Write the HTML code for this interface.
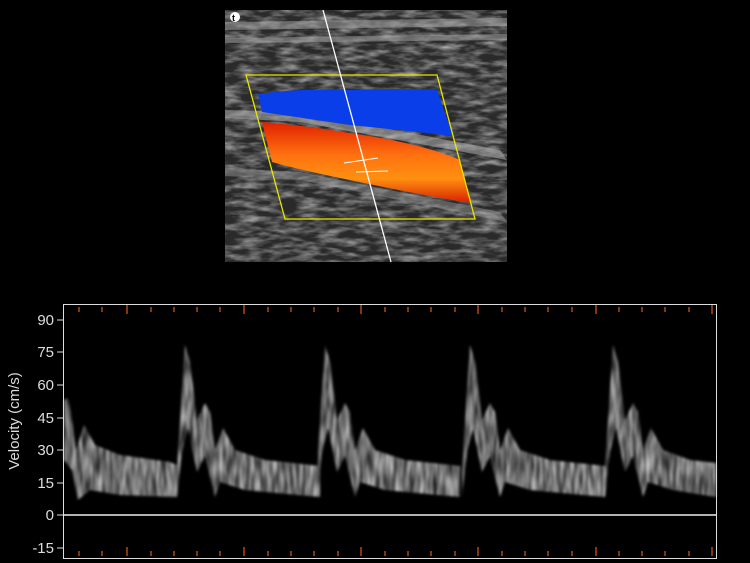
<!DOCTYPE html>
<html><head><style>
html,body{margin:0;padding:0;background:#000;width:750px;height:563px;overflow:hidden}
svg{display:block}
</style></head><body>
<svg width="750" height="563" viewBox="0 0 750 563" xmlns="http://www.w3.org/2000/svg">
<defs>
<filter id="n" x="0" y="0" width="100%" height="100%">
<feTurbulence type="fractalNoise" baseFrequency="0.05 0.18" numOctaves="3" seed="3"/>
<feColorMatrix values="0 0 0 0 0.55  0 0 0 0 0.55  0 0 0 0 0.55  0 0 0 1.4 -0.5"/>
<feComposite in2="SourceGraphic" operator="in"/>
</filter>
<filter id="w" x="-5%" y="-5%" width="110%" height="110%">
<feTurbulence type="fractalNoise" baseFrequency="0.3 0.04" numOctaves="2" seed="5" result="t"/>
<feColorMatrix in="t" values="0 0 0 0 1 0 0 0 0 1 0 0 0 0 1 0 0 0 1.3 -0.1" result="m"/>
<feComposite in="SourceGraphic" in2="m" operator="in"/>
<feGaussianBlur stdDeviation="1.3"/>
</filter>
<linearGradient id="red" x1="0" y1="0" x2="0" y2="1">
<stop offset="0" stop-color="#e02000"/><stop offset="0.4" stop-color="#ff7010"/><stop offset="0.7" stop-color="#ff9010"/><stop offset="1" stop-color="#d82000"/>
</linearGradient>
<g id="cyc">
<path d="M-8,470 L0,345 L5,362 L12,420 L20,403 L25,412 L30,450 L38,428 L50,450 L80,460 L135,466 L135,497 L60,490 L35,482 L30,497 L20,456 L12,472 L3,428 L-3,452 L-8,497 Z" fill="#ccc"/>
</g>
</defs>
<rect x="225" y="10" width="282" height="252" fill="#2a2a2a"/>
<rect x="225" y="10" width="282" height="252" fill="#fff" filter="url(#n)"/>
<path d="M225,22 L507,18 L507,26 L225,30Z M225,38 L507,34 L507,40 L225,43Z" fill="#aaa" opacity=".5"/>
<path d="M225,110 L300,112 L500,150 L507,160 L300,122 L225,118Z" fill="#bbb" opacity=".5"/>
<path d="M225,168 L300,172 L500,212 L507,222 L300,180 L225,176Z" fill="#aaa" opacity=".4"/>
<path d="M258,94 Q300,88 350,90 Q400,88 437,90 L453,136 Q400,130 350,125 L262,112Z" fill="#0a3ee8"/>
<path d="M262,122 Q300,125 350,133 Q420,143 460,160 L471,203 Q420,195 350,180 Q300,170 272,162Z" fill="url(#red)"/>
<polygon points="246,75 437,75 475,219 285,219" fill="none" stroke="#e6e600" stroke-width="1.3"/>
<line x1="323" y1="10" x2="391" y2="262" stroke="#fff" stroke-width="1.3"/>
<path d="M344,163 L378,158 M356,172 L388,171" stroke="#fff" stroke-width="1"/>
<circle cx="235" cy="17" r="5" fill="#fff"/><text x="232" y="21" font-family="Liberation Sans,sans-serif" font-size="9" font-weight="bold" fill="#000">t</text>
<g filter="url(#w)">
<path d="M64,400 L68,398 L72,420 L76,450 L84,425 L95,445 L120,455 L170,462 L177,465 L177,497 L120,495 L90,490 L78,500 L72,470 L64,460Z" fill="#ccc"/>
<use href="#cyc" x="185"/><use href="#cyc" x="325"/><use href="#cyc" x="470"/>
<path d="M605,470 L613,345 L618,362 L625,420 L633,403 L638,412 L643,450 L651,428 L663,450 L690,460 L716,463 L716,497 L673,490 L648,482 L643,497 L633,456 L625,472 L616,428 L610,452 L605,497Z" fill="#ccc"/>
</g>
<rect x="63.5" y="304.5" width="653" height="254" fill="none" stroke="#ddd" stroke-width="1"/>
<line x1="63" y1="515" x2="716" y2="515" stroke="#eee" stroke-width="1.4"/>
<g stroke="#e05a10" stroke-width="1.2">
<path d="M79,307v5M102,307v5M127,305v9M151,307v5M174,307v5M197,307v5M220,307v5M244,305v9M268,307v5M291,307v5M314,307v5M338,307v5M361,305v9M385,307v5M408,307v5M431,307v5M455,307v5M478,305v9M502,307v5M525,307v5M548,307v5M572,307v5M596,305v9M619,307v5M642,307v5M665,307v5M689,307v5M712,305v9"/>
<path d="M79,551v5M102,551v5M127,547v9M151,551v5M174,551v5M197,551v5M220,551v5M244,547v9M268,551v5M291,551v5M314,551v5M338,551v5M361,547v9M385,551v5M408,551v5M431,551v5M455,551v5M478,547v9M502,551v5M525,551v5M548,551v5M572,551v5M596,547v9M619,551v5M642,551v5M665,551v5M689,551v5M712,547v9"/>
</g>
<g stroke="#ddd"><path d="M57,320h6M57,352h6M57,385h6M57,418h6M57,450h6M57,483h6M57,515h6M57,548h6"/></g>
<g font-family="Liberation Sans,sans-serif" font-size="15" fill="#ddd" text-anchor="end">
<text x="54" y="325">90</text><text x="54" y="357">75</text><text x="54" y="390">60</text><text x="54" y="423">45</text><text x="54" y="455">30</text><text x="54" y="488">15</text><text x="54" y="520">0</text><text x="54" y="553">-15</text>
</g>
<text transform="translate(19,421) rotate(-90)" font-family="Liberation Sans,sans-serif" font-size="15" fill="#ddd" text-anchor="middle">Velocity (cm/s)</text>
</svg>
</body></html>
